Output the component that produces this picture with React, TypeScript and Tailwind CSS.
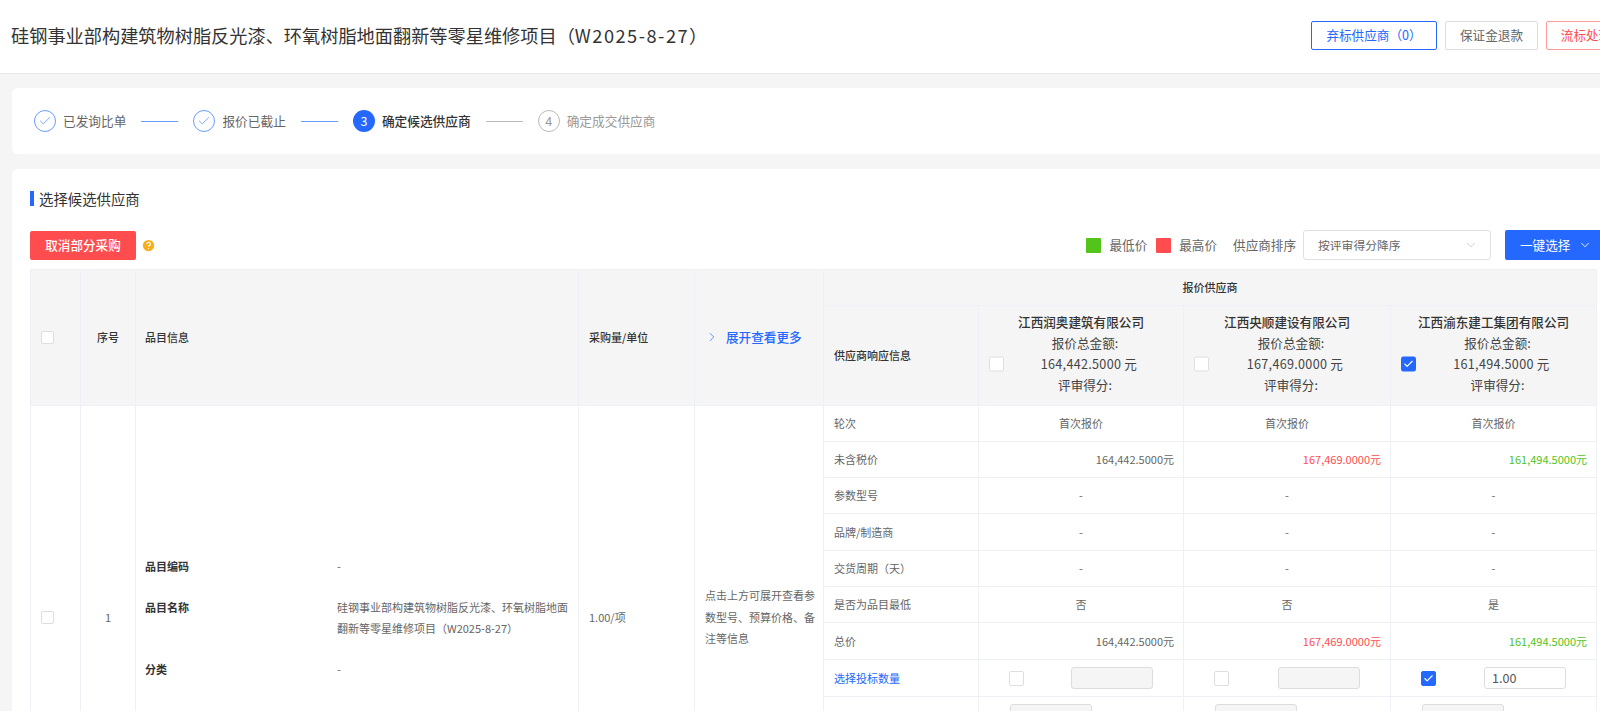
import { Check, ChevronDown, ChevronRight, HelpCircle } from 'lucide-react'

const suppliers = [
    { name: '江西润奥建筑有限公司', amount: '164,442.5000', color: 'text-[#666]', lowest: '否', checked: false },
    { name: '江西央顺建设有限公司', amount: '167,469.0000', color: 'text-[#ff4d4f]', lowest: '否', checked: false },
    { name: '江西渝东建工集团有限公司', amount: '161,494.5000', color: 'text-[#52c41a]', lowest: '是', checked: true },
]

const cellBorder = 'border border-[#edf0f5]'

const CheckBox = ({ checked = false, small = false }: { checked?: boolean; small?: boolean }) => (
    <span
        className={`flex shrink-0 items-center justify-center rounded-[2px] border ${
            small ? 'h-[13px] w-[13px]' : 'h-[15px] w-[15px]'
        } ${checked ? 'border-[#2468ff] bg-[#2468ff]' : 'border-[#dedede] bg-white'}`}
    >
        {checked && <Check size={11} strokeWidth={2.5} className="text-white" />}
    </span>
)

const Step = ({ index, label, state }: { index: number; label: string; state: 'done' | 'active' | 'todo' }) => (
    <div className="flex items-center gap-[7px]">
        {state === 'done' && (
            <span className="flex h-[22px] w-[22px] items-center justify-center rounded-full border border-[#6b9cff]">
                <Check size={14} strokeWidth={1} className="text-[#2468ff]" />
            </span>
        )}
        {state === 'active' && (
            <span className="flex h-[22px] w-[22px] items-center justify-center rounded-full bg-[#2468ff] text-[12.6px] text-white">
                {index}
            </span>
        )}
        {state === 'todo' && (
            <span className="flex h-[22px] w-[22px] items-center justify-center rounded-full border border-[#bbb] text-[12.6px] text-[#999]">
                {index}
            </span>
        )}
        <span
            className={`text-[12.7px] ${
                state === 'active' ? 'font-medium text-[#333]' : state === 'done' ? 'text-[#666]' : 'text-[#999]'
            }`}
        >
            {label}
        </span>
    </div>
)

const StepLine = ({ done }: { done: boolean }) => (
    <span className={`mx-[15px] h-px w-[37px] ${done ? 'bg-[#6b9cff]' : 'bg-[#bbb]'}`} />
)

const TextRow = ({ label, values, height }: { label: string; values: string[]; height: string }) => (
    <tr className={height}>
        <td className={`${cellBorder} px-2.5 text-[#666]`}>{label}</td>
        {values.map((v, id) => (
            <td key={id} className={`${cellBorder} px-2.5 text-center text-[#666]`}>
                {v}
            </td>
        ))}
    </tr>
)

const PriceRow = ({ label, height }: { label: string; height: string }) => (
    <tr className={height}>
        <td className={`${cellBorder} px-2.5 text-[#666]`}>{label}</td>
        {suppliers.map((s) => (
            <td key={s.name} className={`${cellBorder} pr-[9px] text-right ${s.color}`}>
                {s.amount}元
            </td>
        ))}
    </tr>
)

const App = () => {
    return (
        <div className="h-[711px] w-[1600px] overflow-hidden bg-[#f5f5f5] font-['Noto_Sans_CJK_SC','Roboto',sans-serif]">
            <div className="w-[1660px]">
                <header className="flex h-[74px] items-center justify-between border-b border-[#e8e8e8] bg-white pr-[34px] pb-[2px] pl-[11px]">
                    <h1 className="text-[18.2px] font-normal text-[#333]">
                        硅钢事业部构建筑物树脂反光漆、环氧树脂地面翻新等零星维修项目（
                        <span className="tracking-[1.5px]">W2025-8-27</span>）
                    </h1>
                    <div className="flex gap-2 text-[12.6px]">
                        <button className="h-[29px] w-[126px] rounded-[2px] border border-[#2468ff] text-[#2468ff]">
                            弃标供应商（0）
                        </button>
                        <button className="h-[29px] w-[93px] rounded-[2px] border border-[#ddd] text-[#666]">
                            保证金退款
                        </button>
                        <button className="h-[29px] w-[80px] rounded-[2px] border border-[#ff9a9b] text-[#ff4d4f]">
                            流标处理
                        </button>
                    </div>
                </header>

                <section className="mt-[14px] ml-3 flex h-[66px] items-center rounded-l-[6px] bg-white pl-[22px]">
                    <Step index={1} label="已发询比单" state="done" />
                    <StepLine done />
                    <Step index={2} label="报价已截止" state="done" />
                    <StepLine done />
                    <Step index={3} label="确定候选供应商" state="active" />
                    <StepLine done={false} />
                    <Step index={4} label="确定成交供应商" state="todo" />
                </section>

                <section className="mt-[15px] ml-3 rounded-l-[6px] bg-white pt-[22px] pr-[51px] pl-[18px]">
                    <h2 className="flex h-[15px] items-center border-l-4 border-[#2468ff] pl-[5px] text-[14.4px] text-[#333]">
                        选择候选供应商
                    </h2>

                    <div className="mt-[24px] flex h-[30px] items-center">
                        <button className="h-[29px] w-[106px] rounded-[2px] bg-[#ff4d4f] text-[12.6px] font-medium text-white">
                            取消部分采购
                        </button>
                        <HelpCircle size={15} strokeWidth={2} className="ml-[5px] fill-[#faad14] text-white" />

                        <div className="ml-auto flex items-center text-[12.6px] text-[#666]">
                            <span className="h-[15px] w-[15px] rounded-[1px] bg-[#52c41a]" />
                            <span className="ml-2">最低价</span>
                            <span className="ml-[9px] h-[15px] w-[15px] rounded-[1px] bg-[#ff4d4f]" />
                            <span className="ml-2">最高价</span>
                            <span className="ml-4">供应商排序</span>
                            <div className="ml-[7px] flex h-[30px] w-[188px] items-center justify-between rounded-[3px] border border-[#e0e0e0] pr-3 pl-[14px] text-[11.8px]">
                                按评审得分降序
                                <ChevronDown size={14} strokeWidth={1} className="text-[#aaa]" />
                            </div>
                            <button className="ml-[14px] flex h-[30px] w-[104px] items-center gap-2 rounded-[2px] bg-[#2468ff] pl-[15px] text-white">
                                一键选择
                                <ChevronDown size={14} strokeWidth={1.5} />
                            </button>
                        </div>
                    </div>

                    <table className="mt-[9px] w-[1566px] table-fixed border-collapse text-[11px]">
                        <colgroup>
                            <col className="w-[50px]" />
                            <col className="w-[55px]" />
                            <col className="w-[443px]" />
                            <col className="w-[116px]" />
                            <col className="w-[129px]" />
                            <col className="w-[155px]" />
                            <col className="w-[205px]" />
                            <col className="w-[207px]" />
                            <col className="w-[206px]" />
                        </colgroup>
                        <thead className="bg-[#f5f5f5] font-medium text-[#333]">
                            <tr className="h-[36px]">
                                <th rowSpan={2} className={`${cellBorder} px-2.5 font-medium`}>
                                    <CheckBox small />
                                </th>
                                <th rowSpan={2} className={`${cellBorder} font-medium`}>
                                    序号
                                </th>
                                <th rowSpan={2} className={`${cellBorder} pr-2.5 pl-[9px] text-left font-medium`}>
                                    品目信息
                                </th>
                                <th rowSpan={2} className={`${cellBorder} px-2.5 text-left font-medium`}>
                                    采购量/单位
                                </th>
                                <th rowSpan={2} className={`${cellBorder} px-2.5 text-left font-medium`}>
                                    <span className="flex items-center gap-[7px] text-[12.6px] text-[#2468ff]">
                                        <ChevronRight size={14} strokeWidth={1.2} />
                                        展开查看更多
                                    </span>
                                </th>
                                <th colSpan={4} className={`${cellBorder} font-medium`}>
                                    报价供应商
                                </th>
                            </tr>
                            <tr className="h-[100px]">
                                <th className={`${cellBorder} px-2.5 text-left font-medium`}>供应商响应信息</th>
                                {suppliers.map((s) => (
                                    <th key={s.name} className={`${cellBorder} px-2.5 pb-[5px] text-[12.6px] font-normal`}>
                                        <div className="leading-[21px] text-[#444]">
                                            <div className="font-medium text-[#333]">{s.name}</div>
                                            <div className="pl-2">报价总金额:</div>
                                            <div className="relative pl-4 tracking-[0.3px]">
                                                <span className="absolute top-1/2 left-0 -translate-y-1/2">
                                                    <CheckBox checked={s.checked} />
                                                </span>
                                                {s.amount} 元
                                            </div>
                                            <div className="pl-2">评审得分:</div>
                                        </div>
                                    </th>
                                ))}
                            </tr>
                        </thead>
                        <tbody>
                            <tr className="h-[36px]">
                                <td rowSpan={12} className={`${cellBorder} px-2.5`}>
                                    <CheckBox small />
                                </td>
                                <td rowSpan={12} className={`${cellBorder} text-center text-[#666]`}>
                                    1
                                </td>
                                <td rowSpan={12} className={`${cellBorder} pr-0 pl-[9px]`}>
                                    <div className="grid grid-cols-[192px_1fr] gap-y-5 leading-[21px] text-[#666]">
                                        <span className="font-bold text-[#333]">品目编码</span>
                                        <span>-</span>
                                        <span className="font-bold text-[#333]">品目名称</span>
                                        <span className="pr-2">
                                            硅钢事业部构建筑物树脂反光漆、环氧树脂地面翻新等零星维修项目（W2025-8-27）
                                        </span>
                                        <span className="font-bold text-[#333]">分类</span>
                                        <span>-</span>
                                    </div>
                                </td>
                                <td rowSpan={12} className={`${cellBorder} px-2.5 text-[#666]`}>
                                    1.00/项
                                </td>
                                <td rowSpan={12} className={`${cellBorder} pr-1 pl-2.5 leading-[21.5px] text-[#666]`}>
                                    点击上方可展开查看参数型号、预算价格、备注等信息
                                </td>
                                <td className={`${cellBorder} px-2.5 text-[#666]`}>轮次</td>
                                {suppliers.map((s) => (
                                    <td key={s.name} className={`${cellBorder} text-center text-[#666]`}>
                                        首次报价
                                    </td>
                                ))}
                            </tr>
                            <PriceRow label="未含税价" height="h-[36px]" />
                            <TextRow label="参数型号" values={['-', '-', '-']} height="h-[36px]" />
                            <TextRow label="品牌/制造商" values={['-', '-', '-']} height="h-[37px]" />
                            <TextRow label="交货周期（天）" values={['-', '-', '-']} height="h-[36px]" />
                            <TextRow label="是否为品目最低" values={suppliers.map((s) => s.lowest)} height="h-[36px]" />
                            <PriceRow label="总价" height="h-[37px]" />
                            <tr className="h-[37px]">
                                <td className={`${cellBorder} px-2.5 text-[#2468ff]`}>选择投标数量</td>
                                {suppliers.map((s) => (
                                    <td key={s.name} className={`${cellBorder} px-[30px]`}>
                                        <div className="flex items-center justify-between">
                                            <CheckBox checked={s.checked} />
                                            <div
                                                className={`flex h-[22px] w-[82px] items-center rounded-[3px] border border-[#ddd] px-[7px] text-[12.6px] text-[#555] ${
                                                    s.checked ? 'bg-white' : 'bg-[#f5f5f5]'
                                                }`}
                                            >
                                                {s.checked ? '1.00' : ''}
                                            </div>
                                        </div>
                                    </td>
                                ))}
                            </tr>
                            <tr className="h-[37px]">
                                <td className={cellBorder} />
                                {suppliers.map((s) => (
                                    <td key={s.name} className={`${cellBorder} pl-[31px]`}>
                                        <div className="h-[22px] w-[82px] rounded-[3px] border border-[#ddd] bg-[#f5f5f5]" />
                                    </td>
                                ))}
                            </tr>
                            <tr className="h-[32px]">
                                <td className={cellBorder} colSpan={4} />
                            </tr>
                            <tr className="h-[32px]">
                                <td className={cellBorder} colSpan={4} />
                            </tr>
                            <tr className="h-[32px]">
                                <td className={cellBorder} colSpan={4} />
                            </tr>
                        </tbody>
                    </table>
                </section>
            </div>
        </div>
    )
}

export default App
